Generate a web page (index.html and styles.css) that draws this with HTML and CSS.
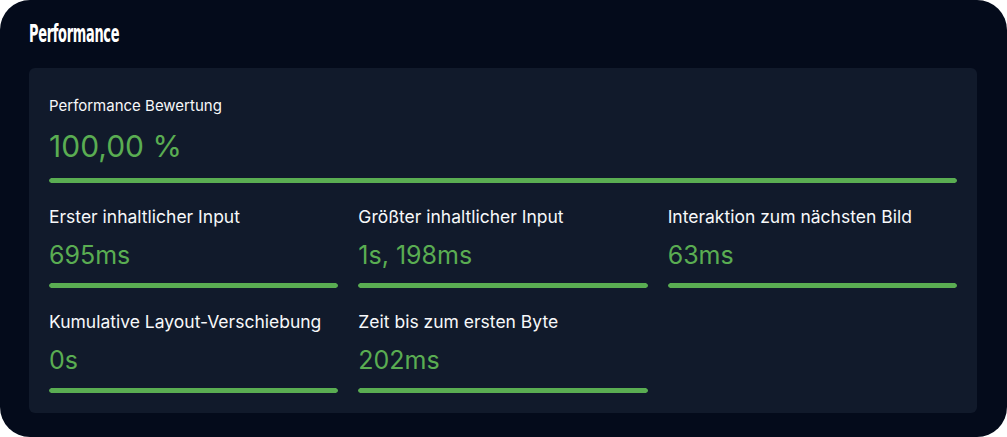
FILE: index.html
```html
<!DOCTYPE html>
<html lang="de">
<head>
  <meta charset="UTF-8">
  <meta name="viewport" content="width=device-width, initial-scale=1.0">
  <title>Performance</title>
  <link rel="stylesheet" href="styles.css">
</head>
<body>
  <div class="perf-card">
    <h2 class="perf-title">Performance</h2>

    <div class="perf-panel">
      <div class="metric metric-main">
        <p class="metric-label">Performance Bewertung</p>
        <p class="metric-value">100,00 %</p>
        <div class="metric-bar"><span style="width: 100%;"></span></div>
      </div>

      <div class="metric-grid">
        <div class="metric">
          <p class="metric-label">Erster inhaltlicher Input</p>
          <p class="metric-value">695ms</p>
          <div class="metric-bar"><span style="width: 100%;"></span></div>
        </div>
        <div class="metric">
          <p class="metric-label">Größter inhaltlicher Input</p>
          <p class="metric-value">1s, 198ms</p>
          <div class="metric-bar"><span style="width: 100%;"></span></div>
        </div>
        <div class="metric">
          <p class="metric-label">Interaktion zum nächsten Bild</p>
          <p class="metric-value">63ms</p>
          <div class="metric-bar"><span style="width: 100%;"></span></div>
        </div>
        <div class="metric">
          <p class="metric-label">Kumulative Layout-Verschiebung</p>
          <p class="metric-value">0s</p>
          <div class="metric-bar"><span style="width: 100%;"></span></div>
        </div>
        <div class="metric">
          <p class="metric-label">Zeit bis zum ersten Byte</p>
          <p class="metric-value">202ms</p>
          <div class="metric-bar"><span style="width: 100%;"></span></div>
        </div>
      </div>
    </div>
  </div>
</body>
</html>
```

FILE: styles.css
```css
* {
  margin: 0;
  padding: 0;
  box-sizing: border-box;
}

body {
  font-family: Inter, "Noto Sans", sans-serif;
  background-color: #ffffff;
  color: #f7f8fa;
}

.perf-card {
  width: 1007px;
  height: 437px;
  background-color: #040b1b;
  border-radius: 30px;
  padding: 21px 30px 24px 29px;
}

.perf-title {
  font-family: "Liberation Sans Narrow", "DejaVu Sans Condensed", "DejaVu Sans", sans-serif;
  font-stretch: condensed;
  font-weight: 700;
  font-size: 24px;
  line-height: 26px;
  letter-spacing: -0.5px;
  color: #ffffff;
  transform: scaleX(0.6);
  transform-origin: left center;
  margin-bottom: 21px;
}

.perf-panel {
  background-color: #111a2b;
  border-radius: 6px;
  padding: 28px 20px 20px;
}

.metric-label {
  font-size: 17.5px;
  line-height: 22px;
  color: #f7f8fa;
}

.metric-value {
  font-size: 25px;
  line-height: 30px;
  color: #5aad52;
  margin-top: 12px;
}

.metric-bar {
  height: 5px;
  margin-top: 13px;
  border-radius: 3px;
  overflow: hidden;
}

.metric-bar span {
  display: block;
  height: 100%;
  background-color: #5aad52;
  border-radius: 3px;
}

.metric-main .metric-label {
  font-size: 15px;
  line-height: 20px;
}

.metric-main .metric-value {
  font-size: 30px;
  line-height: 34px;
  margin-top: 13px;
}

.metric-main .metric-bar {
  margin-top: 15px;
}

.metric-grid {
  display: grid;
  grid-template-columns: repeat(3, 1fr);
  gap: 23px 20px;
  margin-top: 23px;
}
```
